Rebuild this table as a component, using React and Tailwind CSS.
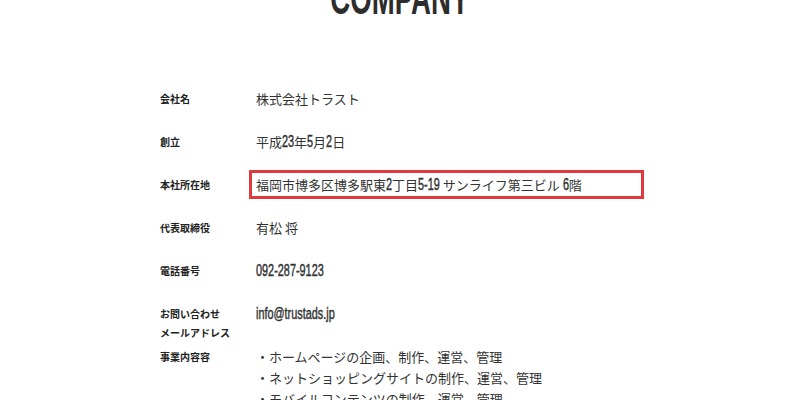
import React, { useLayoutEffect, useRef, useState } from "react";

const JP = { fontFamily: '"Noto Sans CJK JP", sans-serif' };

const rows = [
  { label: "会社名", value: "株式会社トラスト" },
  { label: "創立", value: "平成23年5月2日" },
  { label: "本社所在地", value: "福岡市博多区博多駅東2丁目5-19 サンライフ第三ビル 6階", boxed: true },
  { label: "代表取締役", value: "有松 将" },
  { label: "電話番号", value: "092-287-9123" },
  { label: ["お問い合わせ", "メールアドレス"], value: "info@trustads.jp" },
];

const services = [
  "・ホームページの企画、制作、運営、管理",
  "・ネットショッピングサイトの制作、運営、管理",
  "・モバイルコンテンツの制作、運営、管理",
];

// latin runs are drawn narrow (the page uses a condensed face we don't have)
const SCALE = 0.68;

function Cond({ children }) {
  const ref = useRef(null);
  const [w, setW] = useState(0);
  useLayoutEffect(() => {
    if (ref.current) setW(ref.current.offsetWidth);
  }, [children]);
  return (
    <span
      ref={ref}
      className="inline-block origin-left scale-x-[0.68] text-[16px] leading-[21px] [-webkit-text-stroke:0.45px_currentColor]"
      style={{ fontFamily: '"Liberation Sans", sans-serif', marginRight: -w * (1 - SCALE) }}
    >
      {children}
    </span>
  );
}

function Mixed({ text }) {
  return text.split(/([0-9A-Za-z@.\-]+)/).map((part, i) =>
    /[0-9A-Za-z]/.test(part) ? <Cond key={i}>{part}</Cond> : <span key={i}>{part}</span>
  );
}

export default function App() {
  return (
    <div className="w-[800px] h-[400px] overflow-hidden bg-white text-[#333]" style={JP}>
      <div className="h-[88px] flex justify-center">
        <h1
          className="mt-[-25px] text-[46px] font-bold leading-none text-[#2d2d2d] scale-x-[0.6]"
          style={{ fontFamily: '"Liberation Sans", sans-serif' }}
        >
          COMPANY
        </h1>
      </div>
      <div className="w-[480px] mx-auto">
        {rows.map((r, i) => (
          <div key={i} className="flex h-[43px]">
            <div className="w-[96px] shrink-0 text-[10px] font-bold leading-[19px] pt-[1px] text-[#222]">
              {Array.isArray(r.label) ? r.label.map((l) => <div key={l}>{l}</div>) : r.label}
            </div>
            <div className="relative text-[13px] leading-[21px]">
              <Mixed text={r.value} />
              {r.boxed && (
                <div className="absolute left-[-7px] top-[-4px] w-[395px] h-[29px] border-[3px] border-[#e0393e]" />
              )}
            </div>
          </div>
        ))}
        <div className="flex">
          <div className="w-[96px] shrink-0 text-[10px] font-bold leading-[19px] pt-[1px] text-[#222]">事業内容容</div>
          <div className="text-[13px] leading-[21px]">
            {services.map((s) => (
              <div key={s}>{s}</div>
            ))}
          </div>
        </div>
      </div>
    </div>
  );
}
